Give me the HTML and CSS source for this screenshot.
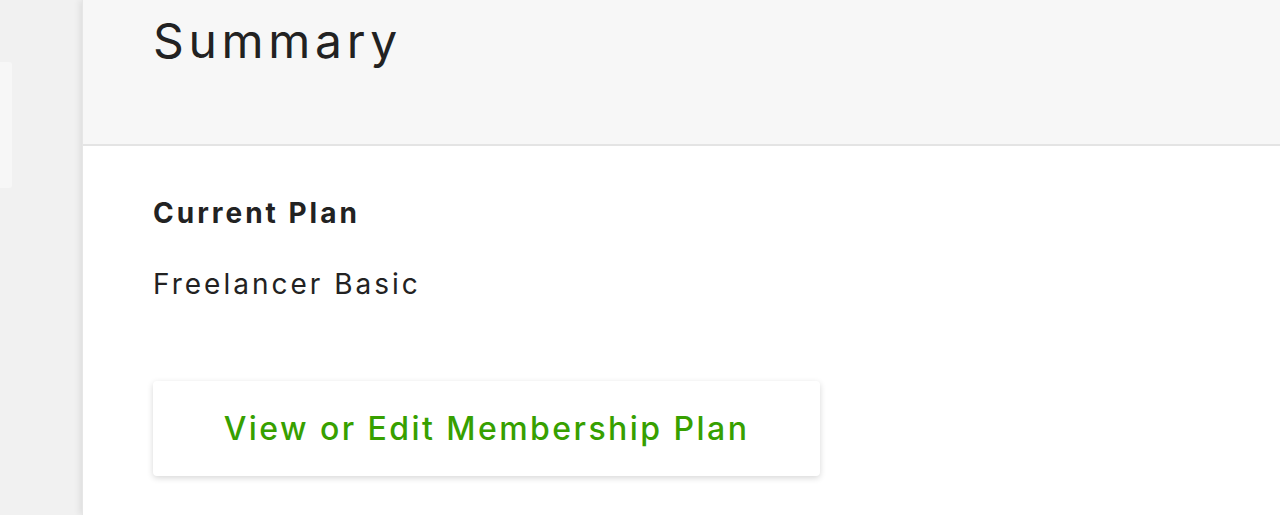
FILE: index.html
```html
<!DOCTYPE html>
<html>
<head>
<meta charset="utf-8">
<link rel="stylesheet" href="styles.css">
</head>
<body>
<div class="page">
  <aside class="sidebar">
    <div class="side-card"></div>
  </aside>
  <main class="main">
    <header class="header">
      <h1 class="title">Summary</h1>
    </header>
    <section class="content">
      <h2 class="label">Current Plan</h2>
      <p class="value">Freelancer Basic</p>
      <button class="btn">View or Edit Membership Plan</button>
    </section>
  </main>
</div>
</body>
</html>
```
FILE: styles.css
```css
html, body {
  margin: 0;
  padding: 0;
  height: 100%;
  overflow: hidden;
}
body {
  font-family: Inter, Lato, sans-serif;
  color: #222;
  background: #f2f2f2;
}
.page {
  display: flex;
  height: 515px;
}
.sidebar {
  width: 82px;
  flex: none;
  background: #f1f1f1;
  padding-top: 62px;
  box-sizing: border-box;
}
.side-card {
  width: 12px;
  height: 126px;
  background: #f7f7f7;
  border-radius: 0 3px 3px 0;
}
.main {
  flex: 1;
  background: #fff;
  box-shadow: -3px 0 6px rgba(0,0,0,0.07);
  border-left: 1px solid #e6e6e6;
}
.header {
  height: 146px;
  background: #f7f7f7;
  border-bottom: 2px solid #e4e4e4;
  box-sizing: border-box;
  padding: 13px 0 0 70px;
}
.title {
  margin: 0;
  font-weight: 400;
  font-size: 48px;
  line-height: 56px;
  letter-spacing: 4.7px;
  color: #222;
}
.content {
  padding: 49px 0 0 70px;
}
.label {
  margin: 0;
  font-size: 28px;
  font-weight: 700;
  line-height: 36px;
  letter-spacing: 3px;
  color: #222;
}
.value {
  margin: 35px 0 0;
  font-size: 28px;
  line-height: 36px;
  letter-spacing: 3px;
}
.btn {
  display: flex;
  align-items: center;
  justify-content: center;
  margin-top: 79px;
  width: 667px;
  height: 95px;
  padding: 0;
  background: #fff;
  border: none;
  border-radius: 4px;
  box-shadow: 0 2px 6px rgba(0,0,0,0.16);
  font-family: inherit;
  font-size: 32px;
  font-weight: 500;
  color: #37a000;
  letter-spacing: 2.45px;
  cursor: pointer;
}
```
